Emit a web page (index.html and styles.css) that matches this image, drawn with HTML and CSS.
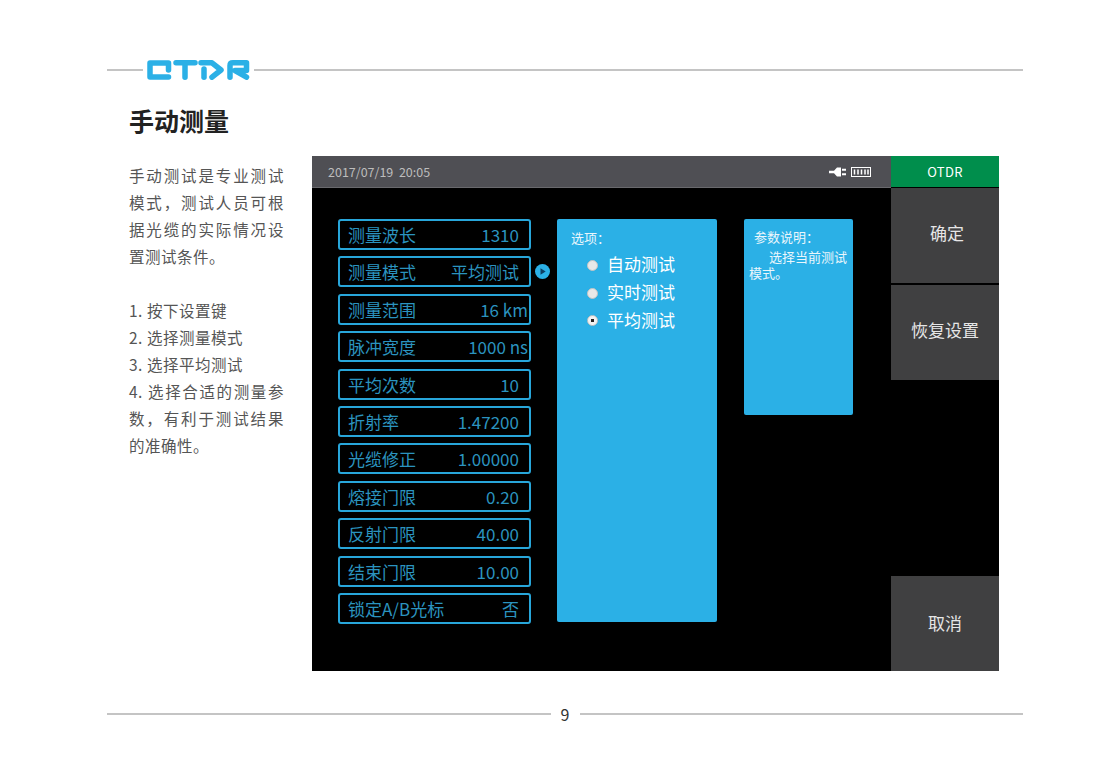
FILE: index.html
```html
<!DOCTYPE html>
<html>
<head>
    <title>OTDR 手动测量</title>
    <link rel="stylesheet" href="styles.css">
</head>

<body>
    <div class="top">
        <div class="line top-left"></div>
        <svg class="logo" width="103" height="20" viewBox="0 0 103 20" fill="none" stroke="#2bb0e6" stroke-width="5.500" stroke-linejoin="round" stroke-linecap="round">
            <path d="M21.500 10V3H3V17H21.500"/>
            <path d="M29 2.800H48M38 2.800V17.200"/>
            <path d="M54 2.800H65L74 10L65 17.200"/>
            <path d="M57 9V17.200"/>
            <path d="M83 17.200V5.500Q83 2.800 86 2.800H99.500V10.500H88L99.500 17.200"/>
        </svg>
        <div class="line top-right"></div>
    </div>

    <h1 class="title">手动测量</h1>

    <div class="main">
        <div class="intro">
            <p>手动测试是专业测试模式，测试人员可根据光缆的实际情况设置测试条件。</p>
            <p>1. 按下设置键<br>2. 选择测量模式<br>3. 选择平均测试<br>4. 选择合适的测量参数，有利于测试结果的准确性。</p>
        </div>

        <div class="device">
            <div class="screen">
                <div class="status">
                    <span class="clock">2017/07/19&nbsp; 20:05</span>
                    <svg class="plug" width="17" height="10" viewBox="0 0 17 10" fill="#fff">
                        <path d="M0 3.800H5L8 .5H12V9.500H8L5 6.200H0Z"/>
                        <path d="M13 1.800H17V3.800H13ZM13 6.200H17V8.200H13Z"/>
                    </svg>
                    <svg class="battery" width="20" height="10" viewBox="0 0 20 10" fill="none" stroke="#fff">
                        <rect x=".5" y=".5" width="19" height="9"/>
                        <path d="M3.500 2.500V7.500M7 2.500V7.500M10.500 2.500V7.500M14 2.500V7.500M17 2.500V7.500" stroke-width="1.500"/>
                    </svg>
                </div>
                <div class="panels">
                    <div class="params">
                        <div class="param"><span>测量波长</span><span>1310</span></div>
                        <div class="param current">
                            <span>测量模式</span><span>平均测试</span>
                            <svg class="pointer" width="15" height="15" viewBox="0 0 15 15">
                                <circle cx="7.500" cy="7.500" r="7.500" fill="#2bb0e6"/>
                                <path d="M5.500 4.200L10.700 7.500L5.500 10.800Z" fill="#0d3f63"/>
                            </svg>
                        </div>
                        <div class="param"><span>测量范围</span><span class="wide">16 km</span></div>
                        <div class="param"><span>脉冲宽度</span><span class="wide">1000 ns</span></div>
                        <div class="param"><span>平均次数</span><span>10</span></div>
                        <div class="param"><span>折射率</span><span>1.47200</span></div>
                        <div class="param"><span>光缆修正</span><span>1.00000</span></div>
                        <div class="param"><span>熔接门限</span><span>0.20</span></div>
                        <div class="param"><span>反射门限</span><span>40.00</span></div>
                        <div class="param"><span>结束门限</span><span>10.00</span></div>
                        <div class="param"><span>锁定A/B光标</span><span>否</span></div>
                    </div>
                    <div class="options">
                        <div class="options-title">选项：</div>
                        <div class="option"><i class="radio"></i>自动测试</div>
                        <div class="option"><i class="radio"></i>实时测试</div>
                        <div class="option"><i class="radio on"></i>平均测试</div>
                    </div>
                    <div class="help">
                        <div class="help-title">参数说明：</div>
                        <div class="help-text">选择当前测试模式。</div>
                    </div>
                </div>
            </div>
            <div class="side">
                <div class="mode">OTDR</div>
                <div class="btn ok">确定</div>
                <div class="btn">恢复设置</div>
                <div class="side-gap"></div>
                <div class="btn cancel">取消</div>
            </div>
        </div>
    </div>

    <div class="bottom">
        <div class="line"></div>
        <span class="page-no">9</span>
        <div class="line"></div>
    </div>
</body>
</html>
```

FILE: styles.css
```css
body {
    margin: 0;
    width: 1100px;
    height: 774px;
    overflow: hidden;
    background-color: #fff;
    font-family: "Noto Sans CJK SC", "Noto Sans", sans-serif;
    color: #555;
}

.top {
    display: flex;
    align-items: center;
    height: 20px;
    margin: 60px 77px 0 107px;
}

.line {
    flex: 1;
    height: 2px;
    background-color: #c4c4c4;
}

.top-left {
    flex: none;
    width: 36px;
    margin-right: 4px;
}

.top-right {
    margin-left: 4px;
}

.logo {
    flex: none;
}

.title {
    margin: 22px 0 0 129px;
    font-size: 25px;
    line-height: 36px;
    font-weight: bold;
    color: #222;
}

.main {
    display: flex;
    margin: 18px 0 0 129px;
}

.intro {
    width: 155px;
    margin-right: 28px;
    padding-top: 6px;
    font-size: 15.500px;
    line-height: 27px;
    letter-spacing: .5px;
}

.intro p {
    margin: 0 0 27px 0;
    text-align: justify;
}

.device {
    display: flex;
    width: 687px;
    height: 515px;
}

.screen {
    width: 579px;
    background-color: #000;
}

.status {
    display: flex;
    align-items: center;
    box-sizing: border-box;
    height: 32px;
    padding: 0 20px 0 16px;
    border-bottom: 1px solid #69696d;
    background-color: #4f4f54;
    color: #bdbdbd;
    font-size: 12.500px;
}

.clock {
    flex: 1;
}

.plug {
    margin-right: 5px;
}

.panels {
    display: flex;
    align-items: flex-start;
    padding: 31px 0 0 26px;
}

.params {
    display: flex;
    flex-direction: column;
    gap: 6.400px;
    width: 193px;
    margin-right: 26px;
}

.param {
    position: relative;
    display: flex;
    justify-content: space-between;
    align-items: center;
    box-sizing: border-box;
    height: 31px;
    padding: 0 10px 0 8px;
    border: 2px solid #28a6da;
    border-radius: 3px;
    color: #2b93bf;
    font-size: 17px;
    white-space: nowrap;
}

.wide {
    margin-right: -9px;
}

.pointer {
    position: absolute;
    top: 6px;
    right: -21px;
}

.options {
    box-sizing: border-box;
    width: 160px;
    height: 403px;
    margin-right: 27px;
    padding: 9px 14px;
    border-radius: 2px;
    background-color: #2bb0e6;
    color: #fff;
}

.options-title {
    margin-bottom: 2px;
    font-size: 13px;
    line-height: 20px;
    color: #eaf6fc;
}

.option {
    display: flex;
    align-items: center;
    height: 27.700px;
    padding-left: 16px;
    font-size: 17px;
}

.radio {
    box-sizing: border-box;
    width: 11px;
    height: 11px;
    margin: 3px 9px 0 0;
    border-radius: 50%;
    background-color: #e8e8e8;
    border: 1px solid #c4c4c4;
}

.radio.on {
    background: radial-gradient(circle, #222 0 1.500px, #f2f2f2 2px);
}

.help {
    box-sizing: border-box;
    width: 109px;
    height: 196px;
    padding: 10px 3px 10px 5px;
    border-radius: 2px;
    background-color: #2bb0e6;
    color: #eaf6fc;
    font-size: 13px;
    line-height: 16px;
}

.help-title {
    padding-left: 5px;
    margin-bottom: 4px;
}

.help-text {
    text-indent: 20px;
}

.side {
    display: flex;
    flex-direction: column;
    width: 108px;
    background-color: #000;
}

.mode {
    height: 31px;
    line-height: 31px;
    text-align: center;
    background-color: #008e4c;
    color: #fff;
    font-size: 13px;
    letter-spacing: .3px;
}

.btn {
    height: 95px;
    box-sizing: border-box;
    margin-top: 2px;
    padding-top: 32px;
    text-align: center;
    background-color: #404041;
    color: #e6e6e6;
    font-size: 17px;
    line-height: 26px;
}

.ok {
    margin-top: 1px;
    padding-left: 4px;
}

.side-gap {
    flex: 1;
}

.cancel {
    padding-top: 34px;
}

.bottom {
    display: flex;
    align-items: center;
    gap: 10px;
    margin: 32px 77px 0 107px;
}

.page-no {
    width: 9px;
    text-align: center;
    font-size: 16px;
    line-height: 22px;
    color: #333;
}
```
